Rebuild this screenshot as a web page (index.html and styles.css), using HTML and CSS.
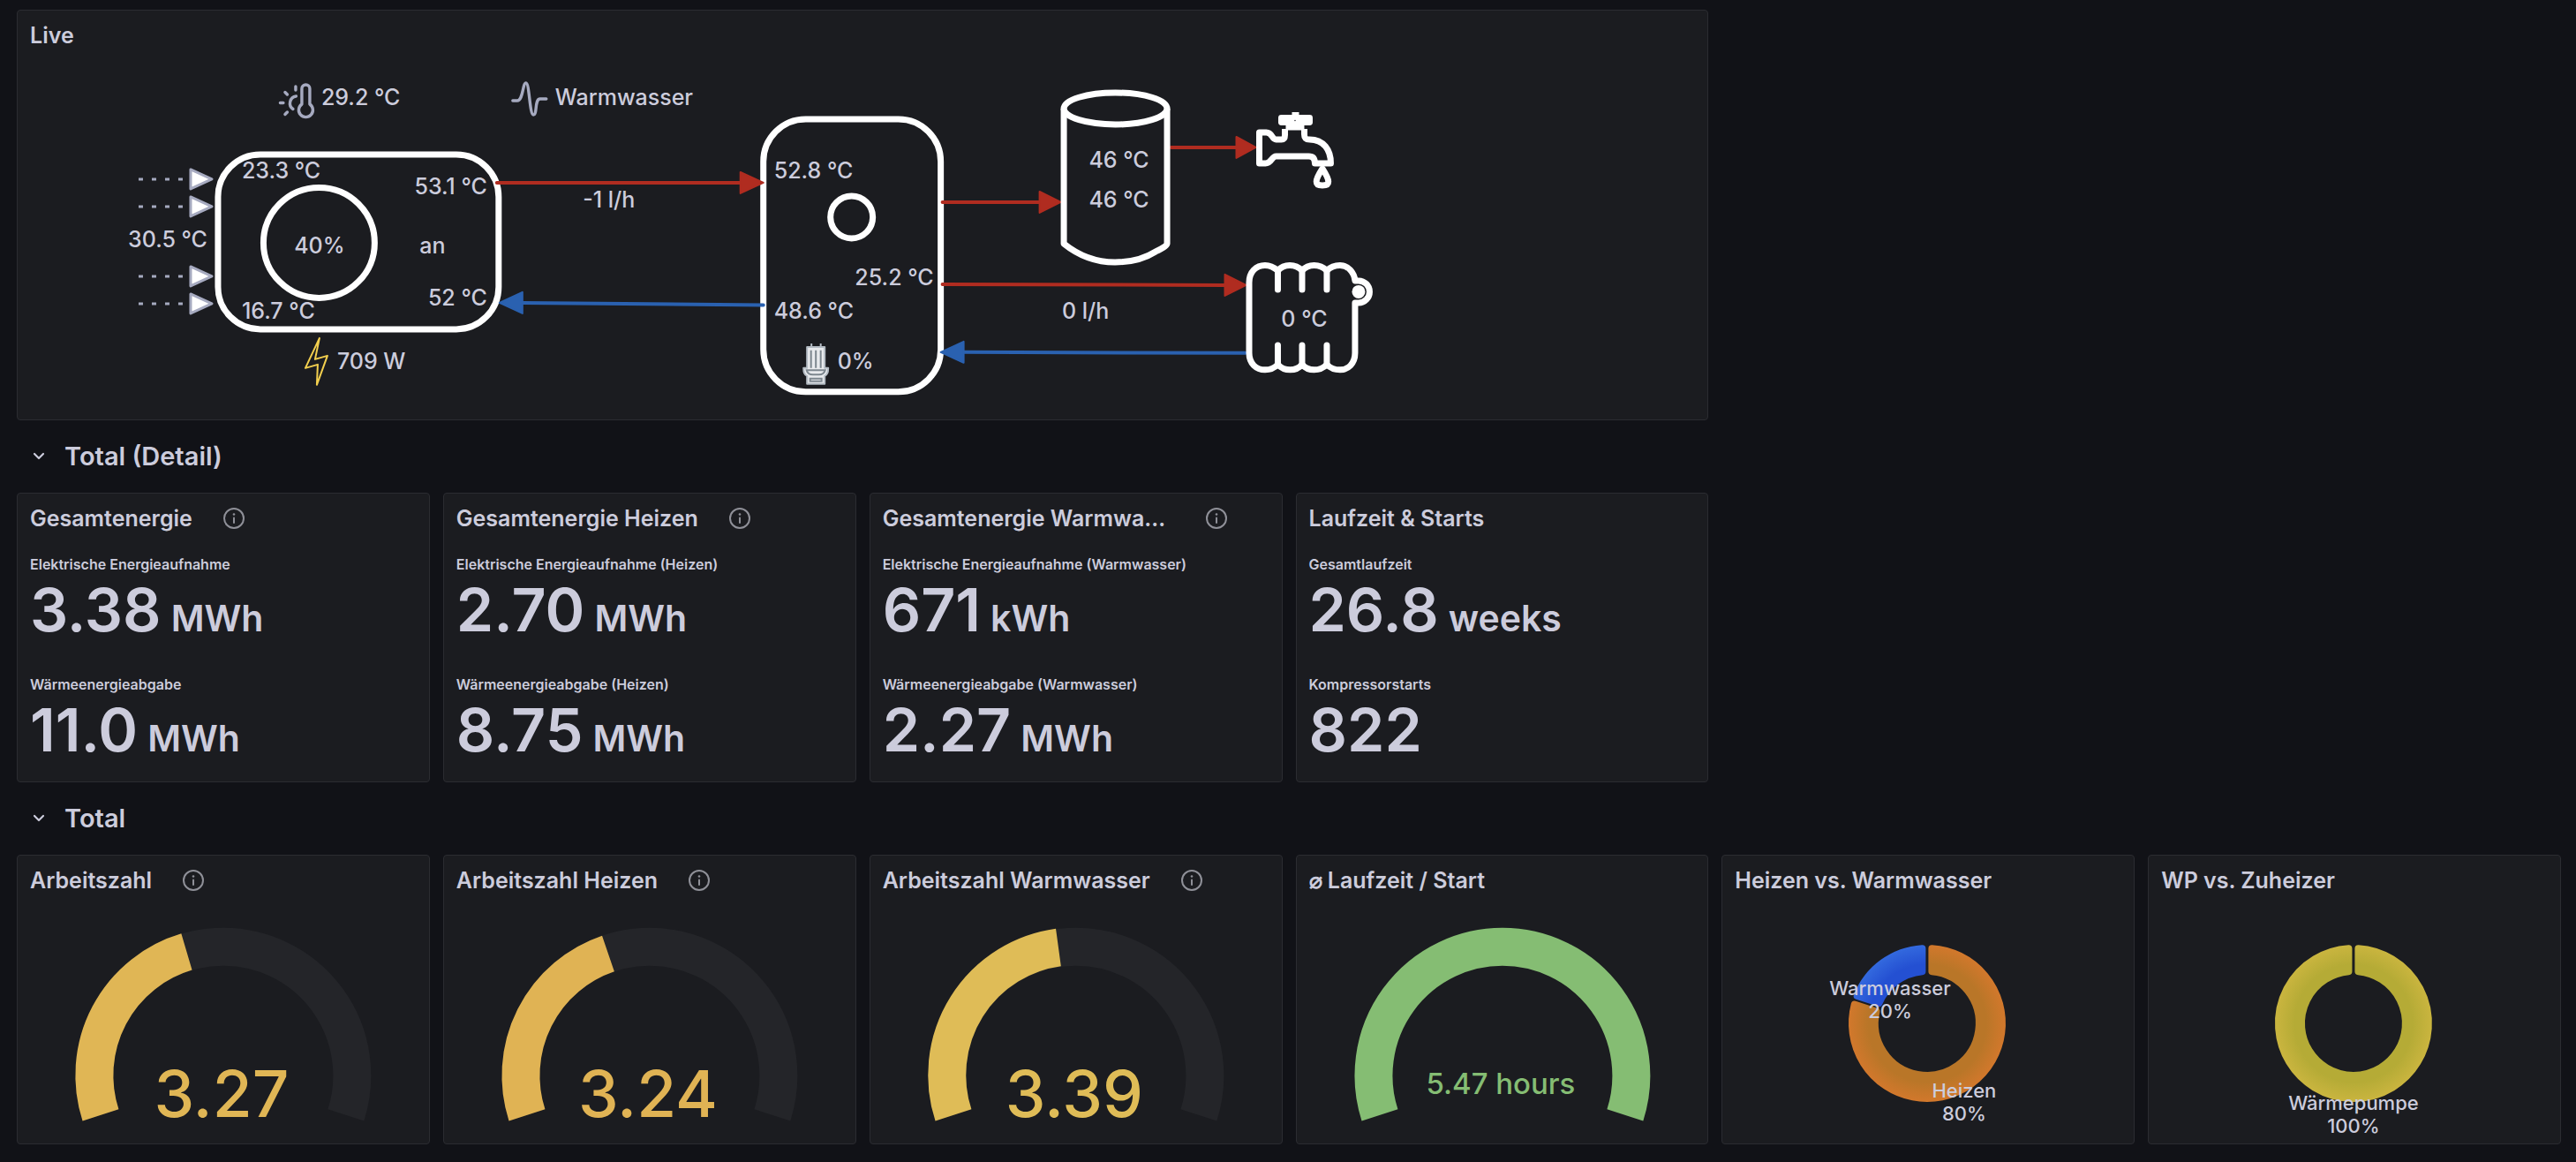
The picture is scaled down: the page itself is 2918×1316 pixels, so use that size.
FILE: index.html
```html
<!DOCTYPE html>
<html lang="de">
<head>
<meta charset="utf-8">
<meta name="viewport" content="width=device-width, initial-scale=1">
<title>Wärmepumpe</title>
<link rel="stylesheet" href="styles.css">
</head>
<body>
<svg class="defs" aria-hidden="true">
  <defs>
    <symbol id="info" viewBox="0 0 24 24">
      <circle cx="12" cy="12" r="11" fill="none" stroke="currentColor" stroke-width="2"/>
      <path d="M12 11.500V17" stroke="currentColor" stroke-width="2" stroke-linecap="round"/>
      <circle cx="12" cy="7.500" r="1.300" fill="currentColor"/>
    </symbol>
    <symbol id="chevron" viewBox="0 0 14 10">
      <path d="M2 2l5 5 5-5" fill="none" stroke="currentColor" stroke-width="2.200" stroke-linecap="round" stroke-linejoin="round"/>
    </symbol>
    <radialGradient id="orange" gradientUnits="userSpaceOnUse" cx="0" cy="0" r="89">
      <stop offset="0.750" stop-color="#b97628"/><stop offset="1" stop-color="#d2782c"/>
    </radialGradient>
    <radialGradient id="blue" gradientUnits="userSpaceOnUse" cx="0" cy="0" r="89">
      <stop offset="0.750" stop-color="#2450d2"/><stop offset="1" stop-color="#3369de"/>
    </radialGradient>
    <radialGradient id="yellow" gradientUnits="userSpaceOnUse" cx="0" cy="0" r="89">
      <stop offset="0.750" stop-color="#b5ab36"/><stop offset="1" stop-color="#cab53f"/>
    </radialGradient>
  </defs>
</svg>
<main class="dashboard">
  <section class="panel live">
    <header class="panel-header"><h2>Live</h2></header>
    <svg class="chart" viewBox="20 70 1915 405" role="img" aria-label="Anlagenschema">
      <g class="icon-line">
        <path d="M342 118V100.500a4.500 4.500 0 0 1 9 0V118a8 8 0 1 1-9 0z"/>
        <path d="M335.500 109a8 8 0 0 0-3.500 14.500M335 98v4M323 104.500l2.500 2.500M317.500 116.500h3.500M325.500 127l-2.500 2.500"/>
        <path d="M581 114h5c7 0 6-20 10-20s4 36 8.500 36 1-18 7.500-18h7"/>
      </g>
      <g class="dots">
        <path d="M157 203h51M157 234h51M157 313h51M157 344h51"/>
      </g>
      <g class="tips">
        <path d="M216 192l24 11-24 11zM216 223l24 11-24 11zM216 302l24 11-24 11zM216 333l24 11-24 11z"/>
      </g>
      <g class="shape">
        <rect x="247" y="175" width="318" height="198" rx="48"/>
        <ellipse cx="361.500" cy="275" rx="63" ry="62.500"/>
        <rect x="865" y="135" width="201" height="309" rx="48"/>
        <circle cx="965" cy="246" r="24"/>
      </g>
      <path class="bolt" d="M362 383l-16 34 14-4-1 23 12-33-14 4z"/>
      <g class="hot">
        <path d="M563 207h276M1068 229h110M1327 167h74M1068 322l320 1"/>
        <path class="head" d="M839 195v24l26-12zM1178 217v24l24-12zM1401 155v24l22-12zM1388 311v24l24-12z"/>
      </g>
      <g class="cold">
        <path d="M865 345.500l-273-2.500M1411 400l-319-1"/>
        <path class="head" d="M592 331v24l-26-12zM1092 387v24l-26-12z"/>
      </g>
      <g class="shape">
        <ellipse cx="1264" cy="123" rx="58.500" ry="18"/>
        <path d="M1205.500 123v153q26 21 58 21 27 0 46-12 13-6 13-9V123"/>
        <path d="M1478 146v6c0 4 1 6 6 6 16 0 24 12 24 27h-18c0-6-3-8-7-8h-37c-5 0-5 8-12 8h-7v-35h8c7 0 6 8 11 8h6c3 0 4-2 4-5v-7"/>
        <path d="M1452 133.500h32v5h-32zM1457 144h21M1464 130.500h8"/>
        <path d="M1498.500 191c-9 14-9 19 0 19s9-5 0-19z"/>
        <path d="M1415.500 400V320c0-12 8-19.500 18-19.500 6 0 11 3 14.500 6 7-8 20-8 27.500 0 7-8 20-8 28 0 4-4 9-6 15-6 9 0 16 8 17 17.500h4a12.500 12.500 0 0 1 0 25h-4V400c0 12-8 19-17 19-6 0-11-2-15-6-8 8-21 8-28 0-7 8-20 8-27.500 0-4 4-8 6-14.500 6-10 0-18-7-18-19z"/>
        <path class="fins" d="M1448 306v22M1475.500 306v22M1503.500 306v22M1448 391v23M1475.500 391v23M1503.500 391v23"/>
      </g>
      <circle cx="1467.500" cy="136.500" r="0.700" fill="#1b1c20"/>
      <circle cx="1539.500" cy="330.500" r="7.500" fill="#fff"/>
      <g class="rod">
        <path class="rod-body" d="M914.500 393h20v24h4c0 5-1 8-4 9v9h-20v-9c-3-1-4-4-4-9h4zM919.500 389v5M930 389v5"/>
        <path class="rod-detail" d="M919 397v20M924.500 397v20M930 397v20M914 419.500h21c-1 4-3 5-7 5h-7c-4 0-6-1-7-5zM918 429h13v3h-13z"/>
      </g>
      <g class="reading">
        <text x="364" y="119">29.2 °C</text>
        <text x="629" y="119">Warmwasser</text>
        <text x="274" y="202">23.3 °C</text>
        <text x="552" y="220" class="end">53.1 °C</text>
        <text x="235" y="280" class="end">30.5 °C</text>
        <text x="362" y="287" class="mid">40%</text>
        <text x="490" y="287" class="mid">an</text>
        <text x="552" y="346" class="end">52 °C</text>
        <text x="274" y="361">16.7 °C</text>
        <text x="382" y="418">709 W</text>
        <text x="690" y="235" class="mid">-1 l/h</text>
        <text x="877" y="202">52.8 °C</text>
        <text x="1058" y="323" class="end">25.2 °C</text>
        <text x="877" y="361">48.6 °C</text>
        <text x="949" y="418">0%</text>
        <text x="1268" y="190" class="mid">46 °C</text>
        <text x="1268" y="235" class="mid">46 °C</text>
        <text x="1230" y="361" class="mid">0 l/h</text>
        <text x="1478" y="370" class="mid">0 °C</text>
      </g>
    </svg>
  </section>

  <button class="row-toggle" type="button" aria-expanded="true"><svg class="chevron" aria-hidden="true"><use href="#chevron"/></svg>Total (Detail)</button>

  <section class="panel">
    <header class="panel-header"><h2>Gesamtenergie</h2><button class="info" type="button" aria-label="Beschreibung"><svg><use href="#info"/></svg></button></header>
    <dl class="stats">
      <div><dt>Elektrische Energieaufnahme</dt><dd>3.38<span class="unit">MWh</span></dd></div>
      <div><dt>Wärmeenergieabgabe</dt><dd>11.0<span class="unit">MWh</span></dd></div>
    </dl>
  </section>
  <section class="panel">
    <header class="panel-header"><h2>Gesamtenergie Heizen</h2><button class="info" type="button" aria-label="Beschreibung"><svg><use href="#info"/></svg></button></header>
    <dl class="stats">
      <div><dt>Elektrische Energieaufnahme (Heizen)</dt><dd>2.70<span class="unit">MWh</span></dd></div>
      <div><dt>Wärmeenergieabgabe (Heizen)</dt><dd>8.75<span class="unit">MWh</span></dd></div>
    </dl>
  </section>
  <section class="panel">
    <header class="panel-header"><h2>Gesamtenergie Warmwasser</h2><button class="info" type="button" aria-label="Beschreibung"><svg><use href="#info"/></svg></button></header>
    <dl class="stats">
      <div><dt>Elektrische Energieaufnahme (Warmwasser)</dt><dd>671<span class="unit">kWh</span></dd></div>
      <div><dt>Wärmeenergieabgabe (Warmwasser)</dt><dd>2.27<span class="unit">MWh</span></dd></div>
    </dl>
  </section>
  <section class="panel">
    <header class="panel-header"><h2>Laufzeit &amp; Starts</h2></header>
    <dl class="stats">
      <div><dt>Gesamtlaufzeit</dt><dd>26.8<span class="unit">weeks</span></dd></div>
      <div><dt>Kompressorstarts</dt><dd>822</dd></div>
    </dl>
  </section>

  <button class="row-toggle" type="button" aria-expanded="true"><svg class="chevron" aria-hidden="true"><use href="#chevron"/></svg>Total</button>

  <section class="panel">
    <header class="panel-header"><h2>Arbeitszahl</h2><button class="info" type="button" aria-label="Beschreibung"><svg><use href="#info"/></svg></button></header>
    <svg class="chart gauge" viewBox="0 0 466 268" role="img" aria-label="Arbeitszahl 3.27">
      <path class="track" d="M94 236A146 146 0 1 1 372 236"/>
      <path d="M94 236A146 146 0 0 1 191.500 51" stroke="#e0b655"/>
      <text x="231" y="238" fill="#e0b655">3.27</text>
    </svg>
  </section>
  <section class="panel">
    <header class="panel-header"><h2>Arbeitszahl Heizen</h2><button class="info" type="button" aria-label="Beschreibung"><svg><use href="#info"/></svg></button></header>
    <svg class="chart gauge" viewBox="0 0 466 268" role="img" aria-label="Arbeitszahl Heizen 3.24">
      <path class="track" d="M94 236A146 146 0 1 1 372 236"/>
      <path d="M94 236A146 146 0 0 1 186 53" stroke="#e0b354"/>
      <text x="231" y="238" fill="#e0b354">3.24</text>
    </svg>
  </section>
  <section class="panel">
    <header class="panel-header"><h2>Arbeitszahl Warmwasser</h2><button class="info" type="button" aria-label="Beschreibung"><svg><use href="#info"/></svg></button></header>
    <svg class="chart gauge" viewBox="0 0 466 268" role="img" aria-label="Arbeitszahl Warmwasser 3.39">
      <path class="track" d="M94 236A146 146 0 1 1 372 236"/>
      <path d="M94 236A146 146 0 0 1 213 46" stroke="#dfbc57"/>
      <text x="231" y="238" fill="#dfbc57">3.39</text>
    </svg>
  </section>
  <section class="panel">
    <header class="panel-header"><h2>⌀ Laufzeit / Start</h2></header>
    <svg class="chart gauge" viewBox="0 0 466 268" role="img" aria-label="Durchschnittliche Laufzeit 5.47 Stunden">
      <path d="M94 236A146 146 0 1 1 372 236" stroke="#85bd73"/>
      <text class="small" x="231" y="212" fill="#85bd73">5.47 hours</text>
    </svg>
  </section>
  <section class="panel">
    <header class="panel-header"><h2>Heizen vs. Warmwasser</h2></header>
    <svg class="chart pie" viewBox="-232 -132 466 268" role="img" aria-label="Heizen 80%, Warmwasser 20%">
      <path fill="url(#orange)" stroke="url(#orange)" d="M5.500-84.800A85 85 0 1 1-82.200-21.400L-57.500-13.400A59 59 0 1 0 5.500-58.800z"/>
      <path fill="url(#blue)" stroke="url(#blue)" d="M-79.200-31A85 85 0 0 1-5.500-84.800V-58.800A59 59 0 0 0-54.400-22.900z"/>
      <text x="-42" y="-32">Warmwasser</text><text x="-42" y="-6">20%</text>
      <text x="42" y="84">Heizen</text><text x="42" y="110">80%</text>
    </svg>
  </section>
  <section class="panel">
    <header class="panel-header"><h2>WP vs. Zuheizer</h2></header>
    <svg class="chart pie" viewBox="-232 -132 466 268" role="img" aria-label="Wärmepumpe 100%">
      <path fill="url(#yellow)" stroke="url(#yellow)" d="M5.500-84.800A85 85 0 1 1-5.500-84.800V-58.800A59 59 0 1 0 5.500-58.800z"/>
      <text x="0" y="98">Wärmepumpe</text><text x="0" y="124">100%</text>
    </svg>
  </section>
</main>
</body>
</html>
```
FILE: styles.css
```css
* { box-sizing: border-box; }

body {
  margin: 0;
  background: #111217;
  color: #ccccdc;
  font-family: Inter, "Liberation Sans", sans-serif;
}

.defs { position: absolute; width: 0; height: 0; }

.dashboard {
  display: grid;
  grid-template-columns: repeat(6, minmax(0, 1fr));
  column-gap: 15px;
  padding: 11px 17px 19px 19px;
}

.panel {
  background: #1b1c20;
  border: 1px solid #2b2c31;
  border-radius: 4px;
  min-width: 0;
}

.live { grid-column: span 4; }

.panel-header {
  display: flex;
  align-items: center;
  gap: 35px;
  height: 56px;
  padding: 0 62px 0 14px;
}

h2 {
  margin: 0;
  min-width: 0;
  overflow: hidden;
  text-overflow: ellipsis;
  white-space: nowrap;
  font-size: 25px;
  font-weight: 600;
  line-height: 40px;
}

button {
  border: 0;
  padding: 0;
  background: none;
  color: inherit;
  font: inherit;
  cursor: pointer;
}

.info { flex: none; width: 24px; height: 24px; color: #8f9098; }
.info svg { display: block; width: 24px; height: 24px; }

.row-toggle {
  grid-column: 1 / -1;
  display: flex;
  align-items: center;
  gap: 22px;
  height: 82px;
  padding-left: 18px;
  font-size: 29px;
  font-weight: 600;
}

.chevron { width: 14px; height: 10px; }

.chart { display: block; width: 100%; height: auto; margin-top: 2px; }

.stats {
  display: grid;
  gap: 36px;
  margin: 0;
  padding: 12px 14px 22px;
}

dt { font-size: 16px; font-weight: 600; line-height: 24px; }

dd {
  margin: 0;
  height: 76px;
  font-size: 68px;
  font-weight: 600;
  line-height: 78px;
  white-space: nowrap;
}

.unit { margin-left: 11px; font-size: 41px; line-height: 1; }

.shape { fill: none; stroke: #fff; stroke-width: 7; stroke-linejoin: round; }
.fins { stroke-linecap: round; }
.icon-line { fill: none; stroke: #a6aac0; stroke-width: 3.4; stroke-linecap: round; stroke-linejoin: round; }
.dots { fill: none; stroke: #a6aac0; stroke-width: 3; stroke-dasharray: 5 10; }
.tips { fill: #fff; stroke: #a6aac0; stroke-width: 3; stroke-linejoin: round; }
.bolt { fill: none; stroke: #f2cf4e; stroke-width: 2; stroke-linejoin: round; }
.hot { fill: none; stroke: #b02c20; stroke-width: 4; stroke-linecap: round; }
.cold { fill: none; stroke: #2a61b0; stroke-width: 4; stroke-linecap: round; }
.head { stroke-width: 2; stroke-linejoin: round; }
.hot .head { fill: #b02c20; }
.cold .head { fill: #2a61b0; }
.rod-body { fill: #e8eaed; stroke: #b4bcc4; stroke-width: 2; stroke-linejoin: round; }
.rod-detail { fill: none; stroke: #7d878f; stroke-width: 2; }

.reading { fill: #ccccdc; font-size: 25px; font-weight: 500; }
.mid { text-anchor: middle; }
.end { text-anchor: end; }

.gauge { fill: none; stroke-width: 43; }
.gauge .track { stroke: #242529; }
.gauge text { stroke: none; font-size: 73px; font-weight: 500; text-anchor: middle; }
.gauge .small { font-size: 33px; }

.pie { stroke-width: 8; stroke-linejoin: round; }
.pie text { fill: #ccccdc; font-size: 22px; font-weight: 500; text-anchor: middle; }
```
